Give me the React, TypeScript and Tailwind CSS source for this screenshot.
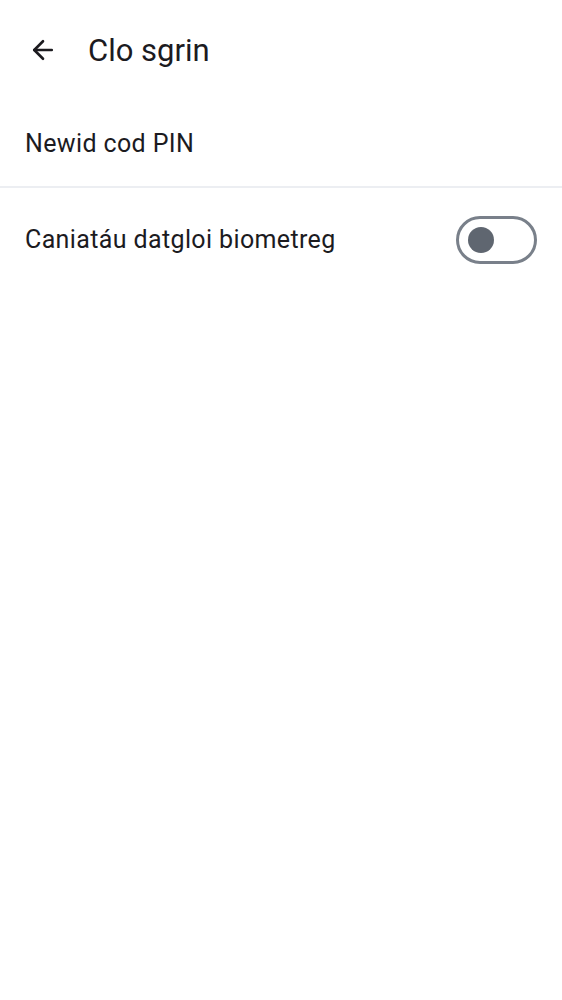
import { ArrowLeft } from 'lucide-react'

export default function App() {
  return (
    <main className="min-h-screen w-full bg-white font-['Roboto',sans-serif] text-[#1c1b1f]">
      <header className="flex h-[100px] items-center pl-[28px]">
        <button aria-label="Back" className="flex h-[30px] w-[30px] items-center justify-center">
          <ArrowLeft size={30} strokeWidth={2.1} />
        </button>
        <h1 className="ml-[30px] text-[31px] leading-none">Clo sgrin</h1>
      </header>

      <div className="flex h-[88px] items-center border-b-2 border-[#eceef2] px-[25px] pt-[2px]">
        <span className="text-[25px] tracking-[0.015em]">Newid cod PIN</span>
      </div>

      <div className="flex h-[104px] items-center justify-between pl-[25px] pr-[25px]">
        <span className="text-[25px] tracking-[0.015em]">Caniatáu datgloi biometreg</span>
        <div className="flex h-[48px] w-[81px] items-center rounded-full border-[3px] border-[#79808a] pl-[9px]">
          <div className="h-[26px] w-[26px] rounded-full bg-[#5f6670]" />
        </div>
      </div>
    </main>
  )
}
